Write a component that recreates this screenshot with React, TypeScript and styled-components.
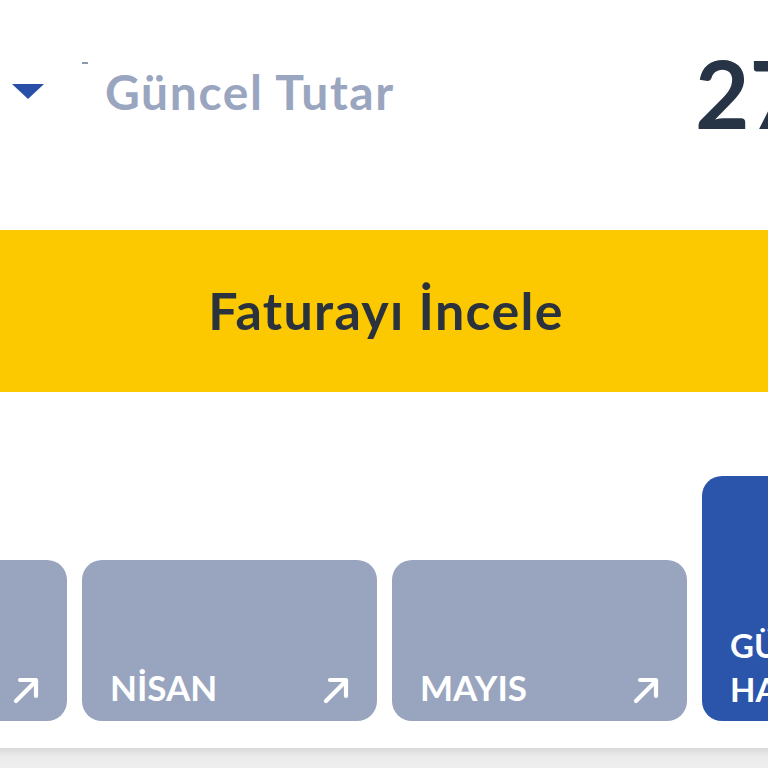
import React from 'react';
import styled, { createGlobalStyle } from 'styled-components';

const Global = createGlobalStyle`
  html, body {
    margin: 0;
    padding: 0;
    background: #ffffff;
    font-family: Lato, "Noto Sans", sans-serif;
    overflow: hidden;
  }
`;

const Page = styled.div`
  width: 768px;
  height: 768px;
  overflow: hidden;
  background: #ffffff;
  display: flex;
  flex-direction: column;
`;

const Header = styled.div`
  height: 230px;
  display: flex;
  align-items: flex-start;
  padding-top: 58px;
  box-sizing: border-box;
  padding-left: 12px;
`;

const Caret = styled.div`
  margin-top: 26px;
  width: 0;
  height: 0;
  border-left: 16px solid transparent;
  border-right: 16px solid transparent;
  border-top: 15px solid #2a4fa8;
`;

const Dash = styled.div`
  width: 6px;
  height: 2px;
  background: #8c97b0;
  margin: 4px 0 0 38px;
`;

const Label = styled.div`
  margin-left: 17px;
  font-size: 48px;
  font-weight: 700;
  color: #9aa5bf;
  line-height: 1;
  margin-top: 10px;
  letter-spacing: 1.6px;
  white-space: nowrap;
`;

const AmountSlot = styled.div`
  margin-left: auto;
  flex: 0 0 73px;
  min-width: 0;
  width: 73px;
  overflow: visible;
`;

const Amount = styled.div`
  font-size: 94px;
  font-weight: 700;
  color: #263445;
  line-height: 1;
  margin-top: -12px;
  white-space: nowrap;
`;

const Band = styled.div`
  height: 162px;
  background: #fcc900;
  display: flex;
  align-items: center;
  justify-content: center;
  font-size: 52px;
  font-weight: 700;
  letter-spacing: 1.3px;
  color: #2a323e;
  padding-bottom: 2px;
  padding-left: 4px;
  box-sizing: border-box;
`;

const Cards = styled.div`
  display: flex;
  align-items: flex-end;
  gap: 15px;
  margin-left: -228px;
  margin-top: 84px;
`;

const Card = styled.div<{ $active?: boolean }>`
  flex: 0 0 295px;
  height: ${p => (p.$active ? 245 : 161)}px;
  border-radius: 20px;
  background: ${p => (p.$active ? '#2a55ab' : '#99a5bf')};
  display: flex;
  align-items: flex-end;
  justify-content: space-between;
  padding: 0 26px 16px 28px;
  box-sizing: border-box;
  color: #ffffff;
`;

const CardName = styled.div`
  font-size: 35px;
  font-weight: 700;
  line-height: 1;
  white-space: nowrap;
`;

const ActiveName = styled.div`
  font-size: 33px;
  font-weight: 700;
  line-height: 44px;
  margin-bottom: -6px;
  white-space: nowrap;
`;

const Footer = styled.div`
  margin-top: auto;
  height: 20px;
  background: linear-gradient(#d9d9d9, #ebebeb 40%, #eeeeee);
`;

const Arrow = () => (
  <svg width="30" height="30" viewBox="0 0 30 30" fill="none" stroke="#ffffff" strokeWidth="4.2" strokeLinecap="round" strokeLinejoin="round">
    <path d="M5 26 L25 6" />
    <path d="M9 5 H25 V21" />
  </svg>
);

const months = ['MART', 'NİSAN', 'MAYIS'];

export default function App() {
  return (
    <Page>
      <Global />
      <Header>
        <Caret />
        <Dash />
        <Label>Güncel Tutar</Label>
        <AmountSlot>
          <Amount>27,45 TL</Amount>
        </AmountSlot>
      </Header>
      <Band>Faturayı İncele</Band>
      <Cards>
        {months.map(m => (
          <Card key={m}>
            <CardName>{m}</CardName>
            <Arrow />
          </Card>
        ))}
        <Card $active>
          <ActiveName>
            GÜNCEL
            <br />
            HAZİRAN
          </ActiveName>
        </Card>
      </Cards>
      <Footer />
    </Page>
  );
}
